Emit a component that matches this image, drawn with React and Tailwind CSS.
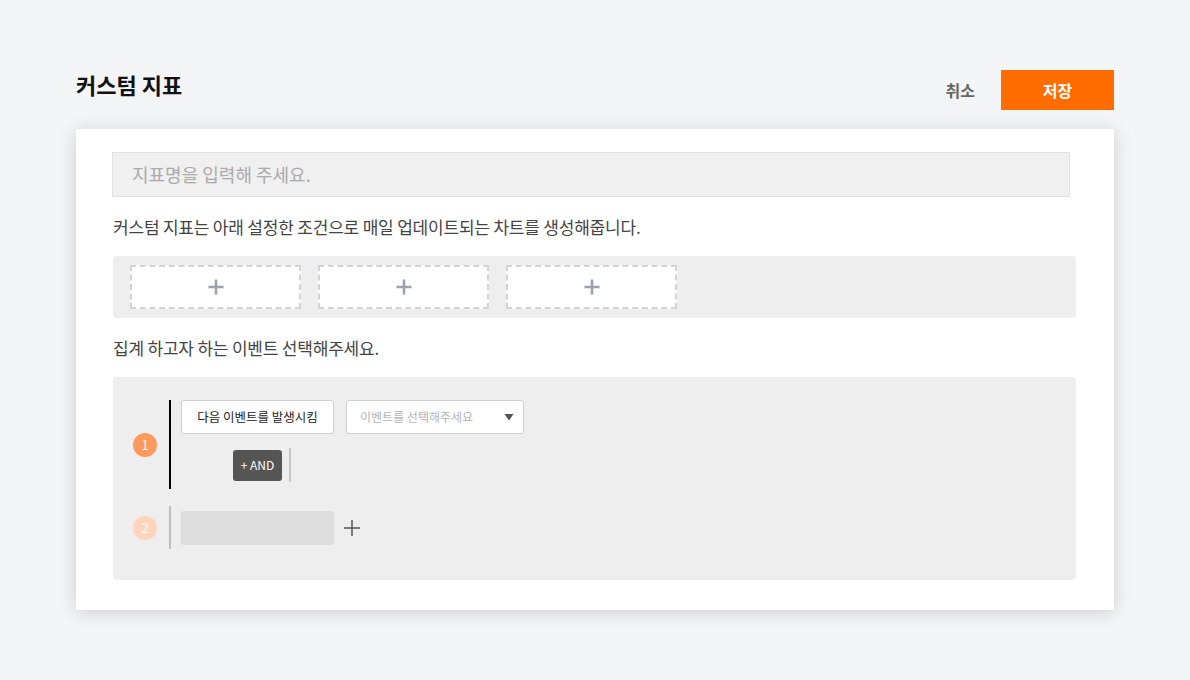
import React from "react";

const font = { fontFamily: '"Noto Sans CJK KR", "Noto Sans", sans-serif' };

function Plus({ className = "" }) {
  return (
    <svg width="18" height="18" viewBox="0 0 18 18" className={className}>
      <path d="M9 1.5V16.5M1.5 9H16.5" stroke="#9ea2ac" strokeWidth="2.6" />
    </svg>
  );
}

export default function App() {
  return (
    <div
      className="w-full min-h-[680px] bg-[#f4f5f7] px-[76px] pt-[70px] text-[#333]"
      style={font}
    >
      <div className="flex justify-between items-start h-10">
        <h1 className="text-[22px] leading-[28px] font-bold text-[#111]">커스텀 지표</h1>
        <div className="flex items-center h-10">
          <button className="text-[16px] font-bold text-[#666] mr-[26px]">취소</button>
          <button className="w-[113px] h-10 bg-[#ff6c00] text-white text-[16px] font-bold">저장</button>
        </div>
      </div>

      <div className="mt-[19px] bg-white shadow-[0_2px_18px_rgba(0,0,0,0.16)] pl-[36px] pt-[23px] pb-[30px]">
        <div className="w-[958px] h-[45px] bg-[#f0f0f0] border border-[#e2e2e2] flex items-center pl-[19px] text-[18px] text-[#aaaaaa]">
          지표명을 입력해 주세요.
        </div>

        <p className="mt-[18px] ml-px text-[17px] leading-[24px] text-[#444] tracking-[-0.2px]">
          커스텀 지표는 아래 설정한 조건으로 매일 업데이트되는 차트를 생성해줍니다.
        </p>

        <div className="mt-[17px] ml-px w-[963px] h-[62px] bg-[#eeeeee] rounded-[4px] flex gap-[17px] pl-[17px] pt-[9px]">
          {[0, 1, 2].map((i) => (
            <div
              key={i}
              className="w-[171px] h-[44px] bg-white border-2 border-dashed border-[#d2d3d8] flex items-center justify-center"
            >
              <Plus />
            </div>
          ))}
        </div>

        <p className="mt-[18px] ml-px text-[17px] leading-[24px] text-[#444] tracking-[-0.2px]">
          집계 하고자 하는 이벤트 선택해주세요.
        </p>

        <div className="mt-[17px] ml-px w-[963px] h-[203px] bg-[#eeeeee] rounded-[4px] pl-[20px] pt-[23px]">
          <div className="flex items-center">
            <div className="w-6 h-6 rounded-full bg-[#ff995c] text-white text-[13px] flex items-center justify-center">
              1
            </div>
            <div className="ml-[12px] border-l-2 border-black pl-[10px] pb-[7px]">
              <div className="flex gap-[12px]">
                <div className="w-[153px] h-[34px] bg-white border border-[#cfcfcf] rounded-[3px] flex items-center justify-center text-[12.5px] text-[#222]">
                  다음 이벤트를 발생시킴
                </div>
                <div className="w-[178px] h-[34px] bg-white border border-[#cfcfcf] rounded-[3px] flex items-center justify-between pl-[13px] pr-[9px] text-[12px] text-[#b5b5b5]">
                  <span>이벤트를 선택해주세요</span>
                  <svg width="10" height="8" viewBox="0 0 10 8">
                    <polygon points="0.5,1 9.5,1 5,7.5" fill="#555" />
                  </svg>
                </div>
              </div>
              <div className="flex items-center mt-[14px] ml-[52px]">
                <div className="w-[49px] h-[31px] bg-[#555555] rounded-[3px] text-white text-[12px] flex items-center justify-center">
                  + AND
                </div>
                <div className="ml-[7px] w-[2px] h-[34px] bg-[#c4c4c4]" />
              </div>
            </div>
          </div>

          <div className="flex items-center mt-[17px]">
            <div className="w-6 h-6 rounded-full bg-[#ffd4ba] text-white text-[13px] flex items-center justify-center">
              2
            </div>
            <div className="ml-[12px] border-l-2 border-[#bdbdbd] pl-[10px] pt-[5px] pb-[4px] flex items-center">
              <div className="w-[153px] h-[34px] bg-[#dedede] rounded-[3px]" />
              <svg width="18" height="18" viewBox="0 0 18 18" className="ml-[9px]">
                <path d="M9 1V17M1 9H17" stroke="#555" strokeWidth="1.5" />
              </svg>
            </div>
          </div>
        </div>
      </div>
    </div>
  );
}
